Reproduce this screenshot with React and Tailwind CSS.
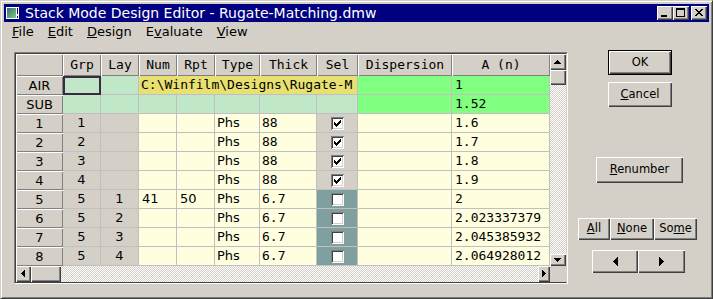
import React from 'react';

const sans = "font-['DejaVu_Sans',sans-serif]";
const mono = "font-['DejaVu_Sans_Mono',monospace]";
const raised = "bg-[#d4d0c8] shadow-[inset_1px_1px_0_#ffffff,inset_-1px_-1px_0_#404040,inset_-2px_-2px_0_#808080]";
const hdr = "bg-[#d4d0c8] shadow-[inset_1px_1px_0_#ffffff,inset_-1px_-1px_0_#808080]";
const dither = "bg-[repeating-conic-gradient(#ffffff_0_25%,#d4d0c8_0_50%)] bg-[length:2px_2px]";
const line = "border-r border-b border-[#c0c0c0]";

const headers = [
  ['w-[38px]', 'Grp'],
  ['w-[38px]', 'Lay'],
  ['w-[38px]', 'Num'],
  ['w-[38px]', 'Rpt'],
  ['w-[45px]', 'Type'],
  ['w-[57px]', 'Thick'],
  ['w-[41px]', 'Sel'],
  ['w-[94px]', 'Dispersion'],
  ['w-[98px]', 'A (n)'],
];

const rows = [
  { n: '1', grp: '1', lay: '', num: '', rpt: '', thick: '88', sel: true, a: '1.6' },
  { n: '2', grp: '2', lay: '', num: '', rpt: '', thick: '88', sel: true, a: '1.7' },
  { n: '3', grp: '3', lay: '', num: '', rpt: '', thick: '88', sel: true, a: '1.8' },
  { n: '4', grp: '4', lay: '', num: '', rpt: '', thick: '88', sel: true, a: '1.9' },
  { n: '5', grp: '5', lay: '1', num: '41', rpt: '50', thick: '6.7', sel: false, a: '2' },
  { n: '6', grp: '5', lay: '2', num: '', rpt: '', thick: '6.7', sel: false, a: '2.023337379' },
  { n: '7', grp: '5', lay: '3', num: '', rpt: '', thick: '6.7', sel: false, a: '2.045385932' },
  { n: '8', grp: '5', lay: '4', num: '', rpt: '', thick: '6.7', sel: false, a: '2.064928012' },
];

const Px = ({ d, w, h, className = '' }) => (
  <svg width={w} height={h} viewBox={`0 0 ${w} ${h}`} shapeRendering="crispEdges" className={className}>
    <path d={d} fill="#000000" />
  </svg>
);

const CheckBox = ({ checked }) => (
  <div className="w-[13px] h-[13px] bg-white flex items-center justify-center shadow-[inset_1px_1px_0_#808080,inset_-1px_-1px_0_#ffffff,inset_2px_2px_0_#404040,inset_-2px_-2px_0_#d4d0c8]">
    {checked && (
      <Px w={7} h={7} d="M6 0h1v1h-1z M5 1h2v1h-2z M0 2h1v1h-1z M4 2h3v1h-3z M0 3h2v1h-2z M3 3h3v1h-3z M0 4h5v1h-5z M1 5h3v1h-3z M2 6h1v1h-1z" />
    )}
  </div>
);

const RowHead = ({ children }) => (
  <div className={`w-[47px] h-[19px] ${hdr} ${sans} text-[13px] text-black flex items-center justify-center`}>{children}</div>
);

const App = () => {
  return (
    <div className="w-[713px] h-[299px] bg-[#d4d0c8] border border-t-[#d4d0c8] border-l-[#d4d0c8] border-r-[#404040] border-b-[#404040] shadow-[inset_1px_1px_0_#ffffff,inset_-1px_-1px_0_#808080] p-[3px] flex flex-col overflow-hidden">
      {/* title bar */}
      <div className="h-[18px] bg-[#000080] flex items-center pl-[1px] pr-[2px]">
        <svg width="16" height="16" viewBox="0 0 16 16" shapeRendering="crispEdges">
          <defs>
            <linearGradient id="ig" x1="0" y1="0" x2="1" y2="1">
              <stop offset="0" stopColor="#3a6a7a" />
              <stop offset="1" stopColor="#7ad07a" />
            </linearGradient>
          </defs>
          <rect x="1" y="2" width="13" height="12" fill="#ffffff" />
          <rect x="2" y="3" width="9" height="10" fill="url(#ig)" />
          <rect x="12" y="3" width="1" height="6" fill="#000080" />
          <rect x="12" y="11" width="1" height="2" fill="#000080" />
        </svg>
        <span className={`ml-[4px] ${sans} text-[14px] text-white leading-none`}>Stack Mode Design Editor - Rugate-Matching.dmw</span>
        <div className="flex-1" />
        <div className={`w-[16px] h-[14px] ${raised} flex`}>
          <Px w={16} h={14} d="M4 9h6v2h-6z" />
        </div>
        <div className={`w-[16px] h-[14px] ${raised} flex`}>
          <Px w={16} h={14} d="M3 2h9v2h-9z M3 4h1v6h-1z M11 4h1v6h-1z M3 10h9v1h-9z" />
        </div>
        <div className={`ml-[2px] w-[16px] h-[14px] ${raised} flex`}>
          <Px w={16} h={14} d="M4 3h2v1h-2z M10 3h2v1h-2z M5 4h2v1h-2z M9 4h2v1h-2z M6 5h4v1h-4z M7 6h2v1h-2z M6 7h4v1h-4z M5 8h2v1h-2z M9 8h2v1h-2z M4 9h2v1h-2z M10 9h2v1h-2z" />
        </div>
      </div>

      {/* menu bar */}
      <div className={`h-[19px] flex items-center pl-[8px] gap-[14px] ${sans} text-[13px] text-black`}>
        <span><span className="underline">F</span>ile</span>
        <span><span className="underline">E</span>dit</span>
        <span><span className="underline">D</span>esign</span>
        <span>E<span className="underline">v</span>aluate</span>
        <span><span className="underline">V</span>iew</span>
      </div>

      {/* client */}
      <div className="flex flex-row flex-1">
        {/* grid */}
        <div className="ml-[10px] mt-[11px] w-[554px] h-[232px] border border-t-[#808080] border-l-[#808080] border-r-white border-b-white">
          <div className="w-full h-full border border-t-[#404040] border-l-[#404040] border-b-[#404040] border-r-[#d4d0c8] flex flex-col">
            <div className="flex flex-row">
              <div className="w-[534px] flex flex-col">
                {/* header */}
                <div className="flex flex-row h-[22px]">
                  <div className={`w-[47px] h-[22px] ${hdr}`} />
                  {headers.map(([w, t]) => (
                    <div key={t} className={`${w} h-[22px] ${hdr} ${mono} text-[13px] text-black flex items-center justify-center`}>{t}</div>
                  ))}
                </div>
                {/* AIR */}
                <div className="flex flex-row">
                  <RowHead>AIR</RowHead>
                  <div className="w-[38px] h-[19px] bg-[#c0e8c8] border-2 border-[#3c2a40]" />
                  <div className={`w-[38px] h-[19px] bg-[#c0e8c8] ${line}`} />
                  <div className={`w-[219px] h-[19px] bg-[#e8e070] ${line} ${mono} text-[13px] text-black flex items-center pl-[2px] overflow-hidden whitespace-nowrap`}>C:\Winfilm\Designs\Rugate-M</div>
                  <div className={`w-[94px] h-[19px] bg-[#80ff80] ${line}`} />
                  <div className={`w-[98px] h-[19px] bg-[#80ff80] ${line} ${mono} text-[13px] text-black flex items-center pl-[3px]`}>1</div>
                </div>
                {/* SUB */}
                <div className="flex flex-row">
                  <RowHead>SUB</RowHead>
                  <div className={`w-[38px] h-[19px] bg-[#c0e8c8] ${line}`} />
                  <div className={`w-[38px] h-[19px] bg-[#c0e8c8] ${line}`} />
                  <div className={`w-[38px] h-[19px] bg-[#c0e8c8] ${line}`} />
                  <div className={`w-[38px] h-[19px] bg-[#c0e8c8] ${line}`} />
                  <div className={`w-[45px] h-[19px] bg-[#c0e8c8] ${line}`} />
                  <div className={`w-[57px] h-[19px] bg-[#c0e8c8] ${line}`} />
                  <div className={`w-[41px] h-[19px] bg-[#c0e8c8] ${line}`} />
                  <div className={`w-[94px] h-[19px] bg-[#80ff80] ${line}`} />
                  <div className={`w-[98px] h-[19px] bg-[#80ff80] ${line} ${mono} text-[13px] text-black flex items-center pl-[3px]`}>1.52</div>
                </div>
                {/* layers */}
                {rows.map((r) => (
                  <div key={r.n} className="flex flex-row">
                    <RowHead>{r.n}</RowHead>
                    <div className={`w-[38px] h-[19px] bg-[#d4d0c8] ${line} ${sans} text-[13px] text-black flex items-center justify-center`}>{r.grp}</div>
                    <div className={`w-[38px] h-[19px] bg-[#d4d0c8] ${line} ${sans} text-[13px] text-black flex items-center justify-center`}>{r.lay}</div>
                    <div className={`w-[38px] h-[19px] bg-[#ffffe0] ${line} ${sans} text-[13px] text-black flex items-center pl-[3px]`}>{r.num}</div>
                    <div className={`w-[38px] h-[19px] bg-[#ffffe0] ${line} ${sans} text-[13px] text-black flex items-center pl-[3px]`}>{r.rpt}</div>
                    <div className={`w-[45px] h-[19px] bg-[#ffffe0] ${line} ${sans} text-[13px] text-black flex items-center pl-[2px]`}>Phs</div>
                    <div className={`w-[57px] h-[19px] bg-[#ffffe0] ${line} ${mono} text-[13px] text-black flex items-center pl-[2px]`}>{r.thick}</div>
                    <div className={`w-[41px] h-[19px] ${r.sel ? 'bg-[#d4d0c8]' : 'bg-[#80a0a0]'} ${line} flex items-center justify-center`}>
                      <CheckBox checked={r.sel} />
                    </div>
                    <div className={`w-[94px] h-[19px] bg-[#ffffe0] ${line}`} />
                    <div className={`w-[98px] h-[19px] bg-[#ffffe0] ${line} ${mono} text-[13px] text-black flex items-center pl-[3px]`}>{r.a}</div>
                  </div>
                ))}
              </div>
              {/* vertical scrollbar */}
              <div className="w-[16px] h-[212px] flex flex-col">
                <div className={`h-[16px] ${raised} flex`}>
                  <Px w={16} h={16} d="M7 6h1v1h-1z M6 7h3v1h-3z M5 8h5v1h-5z M4 9h7v1h-7z" />
                </div>
                <div className={`h-[15px] ${raised}`} />
                <div className={`flex-1 ${dither}`} />
                <div className={`h-[12px] ${raised} flex`}>
                  <Px w={16} h={12} d="M4 4h7v1h-7z M5 5h5v1h-5z M6 6h3v1h-3z M7 7h1v1h-1z" />
                </div>
              </div>
            </div>
            {/* horizontal scrollbar */}
            <div className="flex flex-row h-[16px]">
              <div className="w-[534px] h-[16px] flex flex-row">
                <div className={`w-[15px] h-[16px] ${raised} flex`}>
                  <Px w={15} h={16} d="M5 7h1v1h-1z M6 6h1v3h-1z M7 5h1v5h-1z M8 4h1v7h-1z" />
                </div>
                <div className={`w-[30px] h-[16px] ${raised}`} />
                <div className={`flex-1 ${dither}`} />
                <div className={`w-[12px] h-[16px] ${raised} flex`}>
                  <Px w={12} h={16} d="M4 4h1v7h-1z M5 5h1v5h-1z M6 6h1v3h-1z M7 7h1v1h-1z" />
                </div>
              </div>
              <div className="w-[16px] h-[16px] bg-[#d4d0c8]" />
            </div>
          </div>
        </div>

        {/* right buttons */}
        <div className={`w-[141px] flex flex-col ${sans} text-[11.5px] text-black`}>
          <div className="ml-[40px] mt-[9px] w-[64px] h-[25px] bg-[#d4d0c8] border border-black shadow-[inset_1px_1px_0_#ffffff,inset_-1px_-1px_0_#404040,inset_-2px_-2px_0_#808080] flex items-center justify-center">OK</div>
          <div className={`ml-[40px] mt-[7px] w-[64px] h-[25px] ${raised} flex items-center justify-center`}>
            <span><span className="underline">C</span>ancel</span>
          </div>
          <div className={`ml-[28px] mt-[50px] w-[87px] h-[26px] ${raised} flex items-center justify-center`}>
            <span><span className="underline">R</span>enumber</span>
          </div>
          <div className="ml-[10px] mt-[35px] h-[22px] flex flex-row">
            <div className={`w-[32px] h-[22px] ${raised} flex items-center justify-center`}>
              <span><span className="underline">A</span>ll</span>
            </div>
            <div className={`w-[44px] h-[22px] ${raised} flex items-center justify-center`}>
              <span><span className="underline">N</span>one</span>
            </div>
            <div className={`w-[43px] h-[22px] ${raised} flex items-center justify-center`}>
              <span>So<span className="underline">m</span>e</span>
            </div>
          </div>
          <div className="ml-[24px] mt-[10px] h-[23px] flex flex-row">
            <div className={`w-[46px] h-[23px] ${raised} flex items-center justify-center`}>
              <Px w={5} h={9} d="M0 4h1v1h-1z M1 3h1v3h-1z M2 2h1v5h-1z M3 1h1v7h-1z M4 0h1v9h-1z" />
            </div>
            <div className={`w-[47px] h-[23px] ${raised} flex items-center justify-center`}>
              <Px w={5} h={9} d="M0 0h1v9h-1z M1 1h1v7h-1z M2 2h1v5h-1z M3 3h1v3h-1z M4 4h1v1h-1z" />
            </div>
          </div>
        </div>
      </div>
    </div>
  );
};

export default App;
